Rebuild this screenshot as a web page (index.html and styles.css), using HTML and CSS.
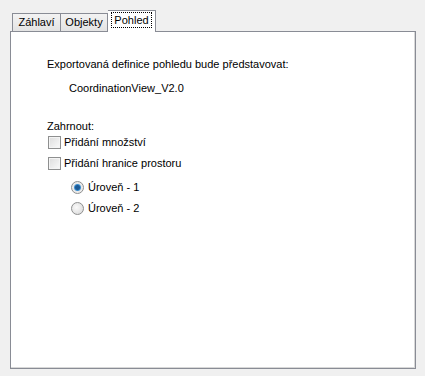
FILE: index.html
```html
<!DOCTYPE html>
<html lang="cs">
<head>
  <meta charset="UTF-8" />
  <title>Pohled</title>
  <link rel="stylesheet" href="styles.css">
</head>
<body>
  <div class="dialog">
    <!-- Tabs -->
    <div class="tabstrip">
      <div class="tab">Záhlaví</div>
      <div class="tab">Objekty</div>
      <div class="tab active"><span class="focus">Pohled</span></div>
    </div>

    <!-- Tab page -->
    <div class="page">
      <p class="intro">Exportovaná definice pohledu bude představovat:</p>
      <p class="view-name">CoordinationView_V2.0</p>

      <p class="group-label">Zahrnout:</p>
      <label class="option"><span class="check"></span>Přidání množství</label>
      <label class="option"><span class="check"></span>Přidání hranice prostoru</label>

      <div class="levels">
        <label class="option"><span class="radio checked"></span>Úroveň - 1</label>
        <label class="option"><span class="radio"></span>Úroveň - 2</label>
      </div>
    </div>
  </div>
</body>
</html>
```

FILE: styles.css
```css
body {
  margin: 0;
  background-color: #f0f0f0;
  font-family: "Liberation Sans", Arial, sans-serif;
  font-size: 11px;
  color: #000;
}

.dialog {
  padding: 10px 9px 7px 10px;
}

.tabstrip {
  display: flex;
  align-items: flex-end;
  padding-left: 2px;
  height: 21px;
}

.tab {
  box-sizing: border-box;
  height: 18px;
  padding: 0 3px;
  border: 1px solid #898c95;
  border-bottom: none;
  border-right: none;
  background: linear-gradient(#f3f3f3, #e3e3e3);
  line-height: 17px;
  text-align: center;
}

.tab:first-child {
  width: 48px;
}

.tab:nth-child(2) {
  width: 48px;
  border-right: 1px solid #898c95;
}

.tab.active {
  position: relative;
  z-index: 1;
  width: 48px;
  height: 22px;
  margin-bottom: -1px;
  padding: 0 2px;
  background: #fff;
  border-right: 1px solid #898c95;
  border-left: none;
  line-height: 18px;
}

.focus {
  display: inline-block;
  padding: 0 2px;
  line-height: 14px;
  border: 1px dotted #000;
}

.page {
  box-sizing: border-box;
  width: 406px;
  height: 338px;
  background: #fff;
  border: 1px solid #898c95;
  box-shadow: inset -1px -1px 0 #d8d8d8;
  padding: 25px 20px 0 36px;
}

.page p {
  margin: 0;
  line-height: 14px;
}

.view-name {
  margin-top: 10px !important;
  padding-left: 22px;
}

.group-label {
  margin-top: 24px !important;
}

.option {
  display: flex;
  align-items: center;
  gap: 3px;
  height: 13px;
  margin-top: 8px;
  line-height: 13px;
}

.option:first-of-type {
  margin-top: 3px;
}

.check {
  box-sizing: border-box;
  width: 13px;
  height: 13px;
  margin-left: 1px;
  border: 1px solid #8e8f8f;
  background: linear-gradient(135deg, #dcdcdc, #fafafa);
  box-shadow: inset 0 0 0 1px #f4f4f4;
}

.levels {
  padding-left: 23px;
  padding-top: 3px;
}

.levels .option {
  margin-top: 8px;
}

.radio {
  box-sizing: border-box;
  width: 13px;
  height: 13px;
  margin-left: 1px;
  margin-right: 1px;
  border-radius: 50%;
  border: 1px solid #8e8f8f;
  background: radial-gradient(circle at 40% 40%, #fafafa, #d6d6d6);
}

.radio.checked {
  background: radial-gradient(circle, #1c5a96 0 2px, #3d8fd0 3px, #e8e8e8 4px, #f5f5f5 100%);
}
```
